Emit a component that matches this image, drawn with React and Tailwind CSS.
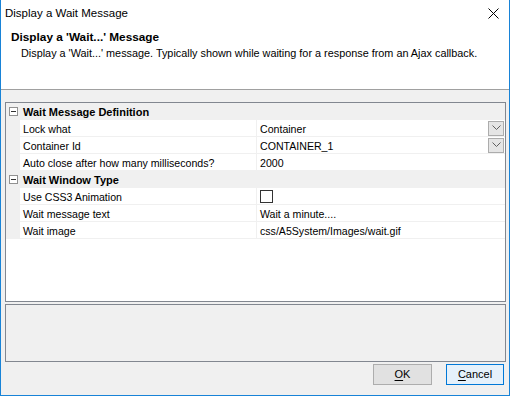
const FONT = "font-['Segoe_UI','Liberation_Sans',Arial,sans-serif]";

function Chevron() {
  return (
    <svg width="9" height="6" viewBox="0 0 9 6" className="block">
      <path d="M0.5 0.5 L4.5 4.5 L8.5 0.5" fill="none" stroke="#606060" strokeWidth="1" />
    </svg>
  );
}

function GroupRow({ title }) {
  return (
    <div className="flex h-[17px] border-b border-[#f0f0f0] bg-[#f0f0f0]">
      <div className="w-[14px] flex items-center justify-center">
        <div className="w-[9px] h-[9px] border border-[#919191] bg-white flex items-center justify-center">
          <div className="w-[5px] h-px bg-[#333]" />
        </div>
      </div>
      <div className="pl-[3px] pt-px font-bold text-[11px] leading-[16px]">{title}</div>
    </div>
  );
}

function PropRow({ name, children, dropdown }) {
  return (
    <div className="flex h-[17px] border-b border-[#f0f0f0]">
      <div className="w-[14px] bg-[#f0f0f0]" />
      <div className="w-[237px] bg-white pl-[3px] pt-px leading-[16px] whitespace-nowrap border-r border-[#f0f0f0]">
        {name}
      </div>
      <div className="flex-1 bg-white flex items-center pl-[3px] pr-px">
        <div className="flex-1 pt-px leading-[16px] whitespace-nowrap">{children}</div>
        {dropdown && (
          <div className="w-[16px] h-[15px] bg-[#e5e5e5] border border-[#acacac] flex items-center justify-center">
            <Chevron />
          </div>
        )}
      </div>
    </div>
  );
}

export default function App() {
  return (
    <div className={`w-[511px] h-[397px] bg-white ${FONT} text-[10.6px] text-black`}>
      <div className="w-[510px] h-[396px] border-l border-r border-b border-[#1883d7] bg-[#f0f0f0] flex flex-col">
        {/* Title + header */}
        <div className="h-[90px] bg-white border-b border-[#a0a0a0]">
          <div className="flex items-center justify-between pl-[4px] pr-[10px] pt-[5px] h-[21px]">
            <span className="text-[11.5px] leading-[16px]">Display a Wait Message</span>
            <svg width="11" height="11" viewBox="0 0 11 11">
              <path d="M0.5 0.5 L10.5 10.5 M10.5 0.5 L0.5 10.5" stroke="#000" strokeWidth="1" />
            </svg>
          </div>
          <div className="pl-[10px] mt-[8px] font-bold text-[11.8px] leading-[16px]">
            Display a 'Wait...' Message
          </div>
          <div className="pl-[20px] text-[10.85px] leading-[16px]">
            Display a 'Wait...' message. Typically shown while waiting for a response from an Ajax callback.
          </div>
        </div>

        {/* Body */}
        <div className="flex-1 flex flex-col pl-[4px] pr-[3px] pt-[12px] pb-[9px]">
          <div className="h-[200px] border border-[#828790] bg-white">
            <GroupRow title="Wait Message Definition" />
            <PropRow name="Lock what" dropdown>Container</PropRow>
            <PropRow name="Container Id" dropdown>CONTAINER_1</PropRow>
            <PropRow name="Auto close after how many milliseconds?">2000</PropRow>
            <GroupRow title="Wait Window Type" />
            <PropRow name="Use CSS3 Animation">
              <div className="w-[13px] h-[13px] border border-[#333] bg-white -mt-px" />
            </PropRow>
            <PropRow name="Wait message text">Wait a minute....</PropRow>
            <PropRow name="Wait image">css/A5System/Images/wait.gif</PropRow>
          </div>

          <div className="mt-[2px] h-[58px] border border-[#828790] bg-[#f0f0f0]" />

          <div className="mt-[2px] flex justify-end gap-[14px] pr-[2px]">
            <button className="w-[59px] h-[21px] bg-[#e1e1e1] border border-[#adadad] text-[11px] leading-[19px]">
              <span className="underline underline-offset-2">O</span>K
            </button>
            <button className="w-[58px] h-[21px] bg-[#e5f1fb] border border-[#0078d7] text-[11px] leading-[19px]">
              <span className="underline underline-offset-2">C</span>ancel
            </button>
          </div>
        </div>
      </div>
    </div>
  );
}
